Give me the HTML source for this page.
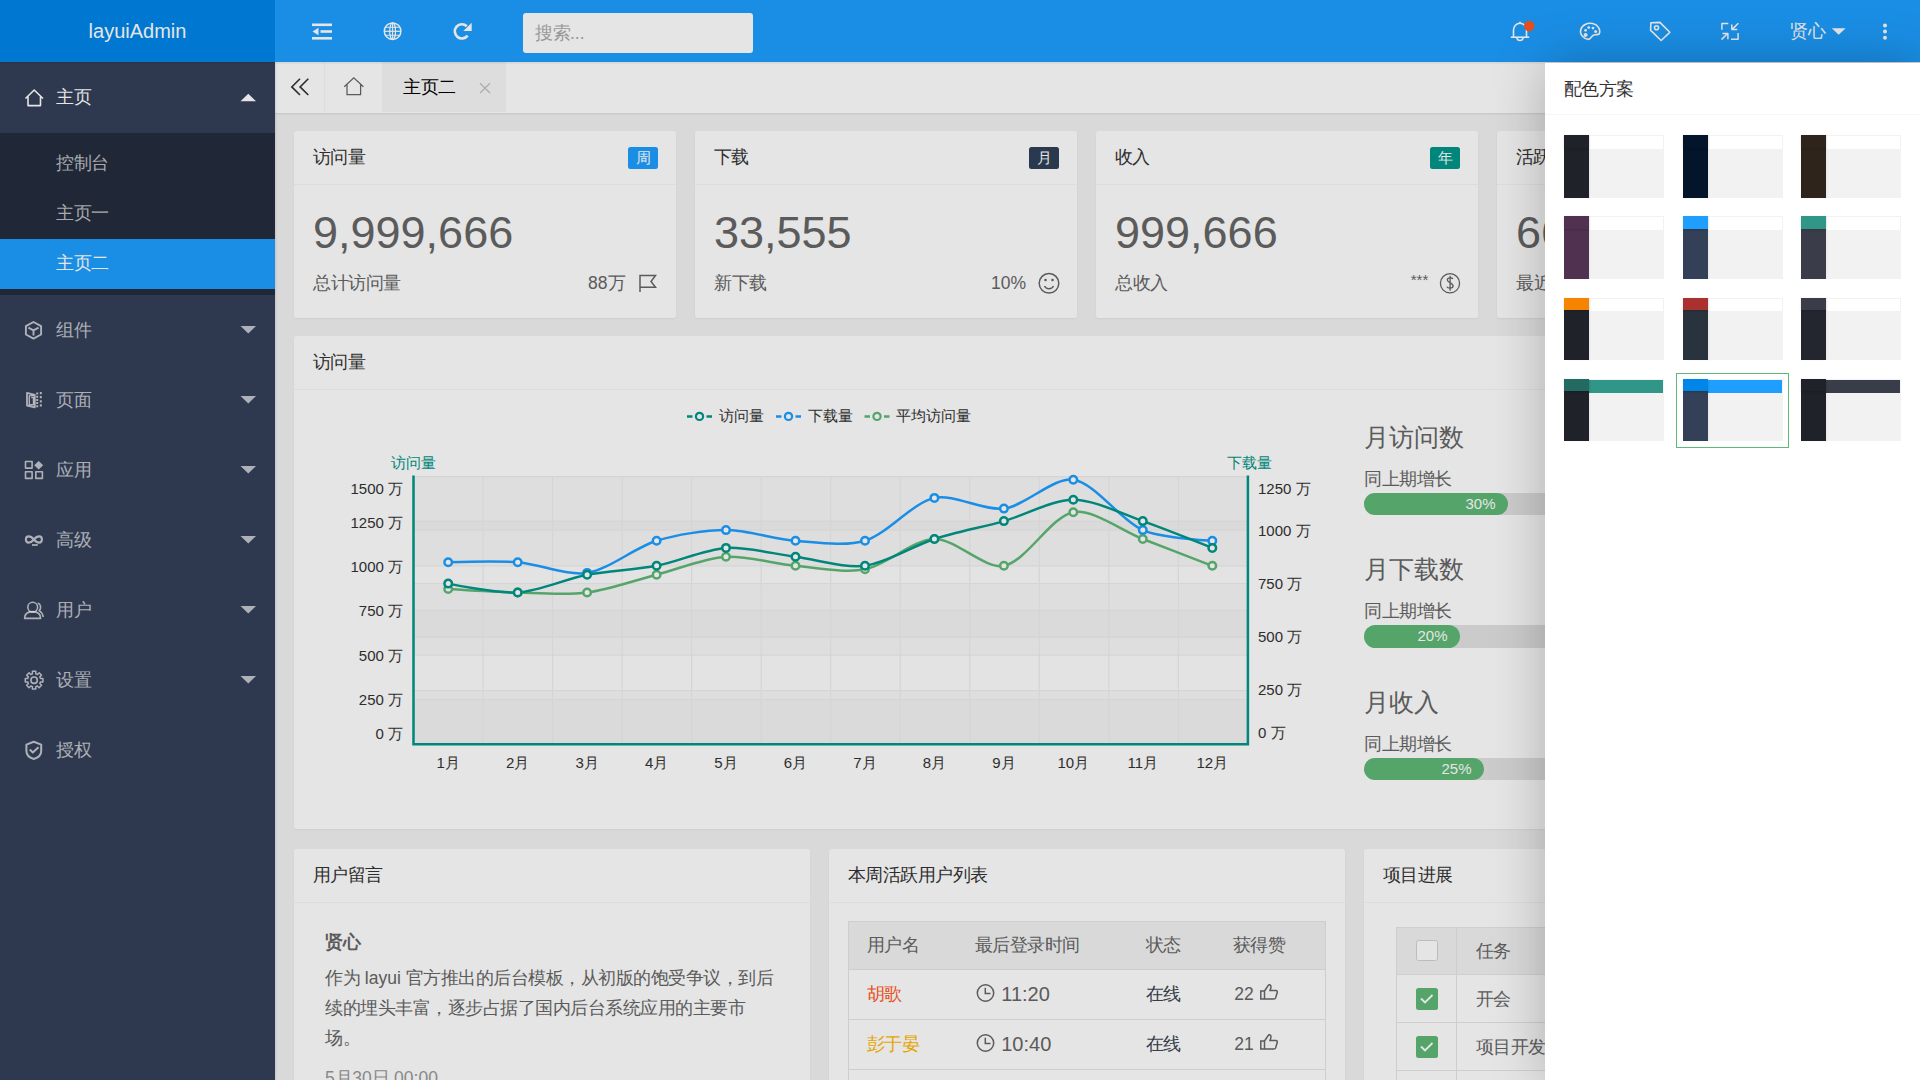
<!DOCTYPE html>
<html><head><meta charset="utf-8">
<style>
*{margin:0;padding:0;box-sizing:border-box}
html,body{width:1920px;height:1080px;overflow:hidden;background:#f2f2f2;font-family:"Liberation Sans",sans-serif;font-size:17.5px;color:#333}
.abs{position:absolute}
#header{position:absolute;left:0;top:0;width:1920px;height:62px;background:#1E9FFF;box-shadow:0 1px 2px 0 rgba(0,0,0,.1);z-index:5}
#logo{position:absolute;left:0;top:0;width:275px;height:62px;background:#0085E8;color:#fff;font-size:20px;line-height:62px;text-align:center}
#side{position:absolute;left:0;top:62px;width:275px;height:1018px;background:#344058;box-shadow:1px 0 2px 0 rgba(0,0,0,.1);z-index:4}
.st{position:absolute;left:56px;height:70px;line-height:70px;font-size:17.5px;color:rgba(255,255,255,.7);white-space:nowrap}
#tabs{position:absolute;left:275px;top:62px;width:1645px;height:50.5px;background:#fff;box-shadow:0 1px 2px 0 rgba(0,0,0,.1);z-index:3}
.card{position:absolute;background:#fff;border-radius:2.5px;box-shadow:0 1px 2px 0 rgba(0,0,0,.05);overflow:hidden}
.ch{position:absolute;left:0;top:0;right:0;height:53.75px;line-height:52.5px;padding-left:18.75px;border-bottom:1.25px solid #f6f6f6;color:#333;font-size:17.5px;white-space:nowrap;overflow:hidden}
.badge{position:absolute;left:334px;top:16px;width:30px;height:22px;line-height:22px;text-align:center;color:#fff;font-size:15px;border-radius:2.5px}
.big{position:absolute;left:19px;top:78.6px;line-height:45px;font-size:45px;color:#666;white-space:nowrap}
.ft{position:absolute;left:19px;top:136.75px;line-height:30px;font-size:17.5px;color:#666;white-space:nowrap}
.ftr{position:absolute;right:51.25px;top:136.75px;line-height:30px;font-size:17.5px;color:#666;white-space:nowrap}
.pl{position:absolute;left:1070px;line-height:30px;font-size:25px;color:#666;white-space:nowrap}
.ps{position:absolute;left:1070px;line-height:30px;font-size:17.5px;color:#666;white-space:nowrap}
.prog{position:absolute;left:1070px;width:480px;height:22.5px;border-radius:25px;background:#e2e2e2}
.bar{position:absolute;left:0;top:0;height:22.5px;border-radius:25px;background:#5FB878}
.bar span{position:absolute;right:12.5px;top:0;line-height:22.5px;font-size:15px;color:#fff}
.tbl{position:absolute}
.thead{position:absolute;left:0;top:0;width:100%;height:48.75px;background:#f2f2f2;border:1.25px solid #e6e6e6}
.tr{position:absolute;left:0;width:100%;height:50px;border:1.25px solid #e6e6e6;border-top:none}
.td{position:absolute;line-height:48.75px;font-size:17.5px;color:#333;white-space:nowrap}
#shade{position:absolute;left:0;top:0;width:1920px;height:1080px;background:rgba(0,0,0,.1);z-index:50}
#panel{position:absolute;left:1545px;top:62.5px;width:375px;height:1017.5px;background:#fff;box-shadow:1px 1px 50px rgba(0,0,0,.25);z-index:60}
.tile{position:absolute;width:100px;height:62.5px;background:#f2f2f2}
.th{position:absolute;left:0;top:0;width:100%;height:13.75px;border-top:1.25px solid #f2f2f2;border-right:1.25px solid #f2f2f2}
.ts{position:absolute;left:0;top:0;width:25px;height:100%;box-shadow:1px 0 2px 0 rgba(0,0,0,.05)}
.tl{position:absolute;left:0;top:0;width:100%;height:12.5px;box-shadow:0 1px 2px 0 rgba(0,0,0,.15)}
.cl{position:absolute;font-size:15px;line-height:20px;color:#333;white-space:nowrap;z-index:2}
.c{display:inline-block;width:1em;font-style:normal;text-align:center}

</style></head><body>
<div id="header">
  <div id="logo">layuiAdmin</div>
  <svg class="abs" style="left:0;top:0" width="1920" height="62" viewBox="0 0 1920 62">
    <g fill="#fff">
      <!-- shrink-right menu icon -->
      <rect x="312" y="23.5" width="20" height="2.6"/>
      <rect x="320.5" y="30.2" width="11.5" height="2.6"/>
      <path d="M312.5 31.5 L318.5 27.8 L318.5 35.2 Z"/>
      <rect x="312" y="37" width="20" height="2.6"/>
    </g>
    <g fill="none" stroke="#fff" stroke-width="1.5">
      <!-- globe -->
      <circle cx="392.6" cy="31.2" r="8.3" stroke-width="1.5"/>
      <ellipse cx="392.6" cy="31.2" rx="2.9" ry="8.3" stroke-width="1.2"/>
      <line x1="392.6" y1="23" x2="392.6" y2="39.5" stroke-width="1.1"/>
      <line x1="384.3" y1="31.3" x2="400.9" y2="31.3" stroke-width="1.2"/>
      <path d="M385.8 27.2 H399.4 M385.8 35.3 H399.4" stroke-width="1.1"/>
      <!-- refresh -->
      <path d="M467.6 35.6 A7.1 7.1 0 1 1 466.8 26.2" stroke-width="2.6"/>
    </g>
    <path d="M471.7 22.8 L471.7 31 L463.4 31 Z" fill="#fff"/>
    <!-- search box -->
    <rect x="523" y="13" width="230" height="40" rx="3" fill="#fff"/>
    <g fill="none" stroke="#fff" stroke-width="1.6" stroke-linejoin="round">
      <!-- bell -->
      <path d="M1513.5 37 V30 A6.5 6.8 0 0 1 1526.5 30 V37"/>
      <path d="M1510.8 37.2 H1529.2"/>
      <path d="M1517 37.5 A3 3 0 0 0 1523 37.5"/>
      <line x1="1520" y1="21.8" x2="1520" y2="23.5"/>
      <!-- palette -->
      <path d="M1599.2 34 A9.6 8.1 0 1 0 1588.6 39.4 C1590.8 39.2 1591.5 35.6 1593.8 34.9 C1596 34.3 1597.8 35 1599.2 34 Z"/>
      <!-- tag -->
      <path d="M1650.9 22.7 L1659.9 22.4 L1669.8 32.3 L1661.1 40.5 L1653.6 33.1 L1650.6 30.4 Z"/>
      <circle cx="1656.5" cy="27.8" r="2"/>
      <!-- screen restore -->
      <path d="M1721.9 29.8 V23.4 H1728.3" stroke-width="1.5"/>
      <path d="M1738.1 32.9 V39.3 H1731" stroke-width="1.5"/>
      <path d="M1738.3 23.3 L1732 29.6 M1731.8 24.4 V29.6 H1737.3" stroke-width="1.5"/>
      <path d="M1721.5 39.6 L1727.8 33.3 M1722.4 33.5 H1727.9 V39.3" stroke-width="1.5"/>
    </g>
    <g fill="#fff">
      <circle cx="1585.6" cy="30.3" r="1.4"/>
      <circle cx="1588.7" cy="27.6" r="1.4"/>
      <circle cx="1593" cy="28.1" r="1.4"/>
      <circle cx="1595.6" cy="31.5" r="1.5"/>
      <circle cx="1585.6" cy="35" r="2"/>
      <circle cx="1529.2" cy="26" r="5.2" fill="#FF5722"/>
      <path d="M1831.8 28.2 H1845.6 L1838.7 34.8 Z"/>
      <circle cx="1885" cy="25.5" r="2"/>
      <circle cx="1885" cy="31.6" r="2"/>
      <circle cx="1885" cy="37.8" r="2"/>
    </g>
  </svg>
  <div class="abs" style="left:535px;top:13px;line-height:40px;font-size:17.5px;color:#aaa"><i class="c">搜</i><i class="c">索</i>...</div>
  <div class="abs" style="left:1790px;top:14px;line-height:34px;font-size:17.5px;color:#fff"><i class="c">贤</i><i class="c">心</i></div>
</div>

<div id="side">
  <div class="abs" style="left:0;top:71px;width:275px;height:162px;background:rgba(0,0,0,.3)"></div>
  <div class="abs" style="left:0;top:176.8px;width:275px;height:50px;background:#1E9FFF"></div>
  <svg class="abs" style="left:0;top:-62px" width="275" height="1080" viewBox="0 0 275 1080">
    <g fill="none" stroke="rgba(255,255,255,.7)" stroke-width="1.6" stroke-linejoin="round">
      <!-- home -->
      <path d="M25.5 98.5 L34.2 90 L43 98.5 M28 96.5 V105.6 H40.5 V96.5" stroke="#fff"/>
      <!-- cube -->
      <path d="M33.5 322 L41.1 326.2 V334.5 L33.5 338.6 L25.9 334.5 V326.2 Z" stroke-width="1.9"/>
      <path d="M28.4 327.7 L33.5 330.4 L38.6 327.7 M33.5 330.4 V335.6" stroke-width="1.9"/>
      <!-- page -->
      <path d="M27 392.8 L34.8 394.8 V407.3 L27 405.5 Z" stroke-width="1.8"/>
      <path d="M29.3 395.5 H34 M29.3 395.5 V404.8 H34 M31.2 397.5 H33.5 V404" stroke-width="1.5"/>
      <path d="M37.2 392.5 V408" stroke-dasharray="2 1.2" stroke-width="2"/>
      <path d="M40.8 392 V407" stroke-dasharray="2.2 1.9" stroke-width="2"/>
      <!-- app -->
      <rect x="25.5" y="461.5" width="6.6" height="6.6"/>
      <rect x="25.5" y="471.8" width="6.6" height="6.6"/>
      <rect x="35.8" y="471.8" width="6.6" height="6.6"/>
      <!-- senior -->
      <path d="M33.9 539.5 C35.5 537.5 37.5 536.4 39.2 536.4 C41 536.4 41.9 537.7 41.9 539.5 C41.9 541.3 41 542.6 39.2 542.6 C37.5 542.6 35.5 541.5 33.9 539.5 C32.3 537.5 30.3 536.4 28.6 536.4 C26.8 536.4 25.9 537.7 25.9 539.5 C25.9 541.3 26.8 542.6 28.6 542.6 C30.3 542.6 32.3 541.5 33.9 539.5 Z" stroke-width="2.1"/>
      <path d="M32 545 H37.8" stroke-width="1.7"/>
      <!-- user -->
      <circle cx="32.7" cy="607.2" r="4.9"/>
      <path d="M24.6 618.4 C24.6 614 27.8 611.6 32.6 611.6 C37.4 611.6 40.6 614 40.6 618.4 Z"/>
      <path d="M37.8 603 C41 604 41.5 608.3 39.2 610.6 C41.5 612 42.9 614.5 43.2 617"/>
      <!-- gear -->
      <circle cx="34.1" cy="680.2" r="3.2"/>
      <path d="M32.39 673.82 L32.38 671.37 L35.82 671.37 L35.81 673.82 L37.40 674.48 L39.13 672.74 L41.56 675.17 L39.82 676.90 L40.48 678.49 L42.93 678.48 L42.93 681.92 L40.48 681.91 L39.82 683.50 L41.56 685.23 L39.13 687.66 L37.40 685.92 L35.81 686.58 L35.82 689.03 L32.38 689.03 L32.39 686.58 L30.80 685.92 L29.07 687.66 L26.64 685.23 L28.38 683.50 L27.72 681.91 L25.27 681.92 L25.27 678.48 L27.72 678.49 L28.38 676.90 L26.64 675.17 L29.07 672.74 L30.80 674.48 Z" stroke-width="1.5"/>
      <!-- shield -->
      <path d="M33.8 741.8 L41.2 744.6 V751 C41.2 755.3 37.8 757.8 33.8 759 C29.8 757.8 26.4 755.3 26.4 751 V744.6 Z" stroke-width="2"/>
      <path d="M29.8 749.6 L32.8 752.4 L38.5 747.2" stroke-width="2"/>
    </g>
    <path d="M38.7 461 L43.2 465.3 L38.7 469.6 L34.2 465.3 Z" fill="rgba(255,255,255,.7)"/>
    <g fill="rgba(255,255,255,.7)">
      <path d="M240.5 101.2 H256 L248.3 93.8 Z" fill="#fff"/>
      <path d="M240.5 326 H256 L248.3 333.5 Z"/>
      <path d="M240.5 396 H256 L248.3 403.5 Z"/>
      <path d="M240.5 466 H256 L248.3 473.5 Z"/>
      <path d="M240.5 536 H256 L248.3 543.5 Z"/>
      <path d="M240.5 606 H256 L248.3 613.5 Z"/>
      <path d="M240.5 676 H256 L248.3 683.5 Z"/>
    </g>
  </svg>
  <div class="st" style="top:0;color:#fff"><i class="c">主</i><i class="c">页</i></div>
  <div class="st" style="top:65.7px"><i class="c">控</i><i class="c">制</i><i class="c">台</i></div>
  <div class="st" style="top:116.2px"><i class="c">主</i><i class="c">页</i><i class="c">一</i></div>
  <div class="st" style="top:166px;color:#fff"><i class="c">主</i><i class="c">页</i><i class="c">二</i></div>
  <div class="st" style="top:232.5px"><i class="c">组</i><i class="c">件</i></div>
  <div class="st" style="top:302.5px"><i class="c">页</i><i class="c">面</i></div>
  <div class="st" style="top:372.5px"><i class="c">应</i><i class="c">用</i></div>
  <div class="st" style="top:442.5px"><i class="c">高</i><i class="c">级</i></div>
  <div class="st" style="top:512.5px"><i class="c">用</i><i class="c">户</i></div>
  <div class="st" style="top:582.5px"><i class="c">设</i><i class="c">置</i></div>
  <div class="st" style="top:652.5px"><i class="c">授</i><i class="c">权</i></div>
</div>

<div id="tabs">
  <div class="abs" style="left:0;top:0;width:49.5px;height:50px;border-right:1.25px solid #f6f6f6"></div>
  <div class="abs" style="left:49.5px;top:0;width:58px;height:50px;border-right:1.25px solid #f6f6f6"></div>
  <div class="abs" style="left:107.5px;top:0;width:123px;height:50px;background:#f6f6f6;border-right:1.25px solid #f6f6f6"></div>
  <div class="abs" style="left:128px;top:0;line-height:50px;font-size:17.5px;color:#000"><i class="c">主</i><i class="c">页</i><i class="c">二</i></div>
  <svg class="abs" style="left:0;top:0" width="300" height="50" viewBox="275 62.5 300 50">
    <g fill="none" stroke="#333" stroke-width="1.5" stroke-linejoin="miter">
      <path d="M300 79.3 L291.8 87.4 L300 95.5 M308.3 79.3 L300.1 87.4 L308.3 95.5" stroke-width="1.6"/>
      <path d="M344.2 87.2 L353.8 78.3 L363.4 87.2 M347 85 V95.2 H360.6 V85" stroke="#666" stroke-width="1.25"/>
      <path d="M480 83.8 L490 93.5 M490 83.8 L480 93.5" stroke="#c2c2c2" stroke-width="1.3"/>
    </g>
  </svg>
</div>

<div id="main">
  <!-- stat cards -->
  <div class="card" style="left:294px;top:131.25px;width:382.25px;height:186.25px">
    <div class="ch"><i class="c">访</i><i class="c">问</i><i class="c">量</i></div>
    <div class="badge" style="background:#1E9FFF"><i class="c">周</i></div>
    <div class="big">9,999,666</div>
    <div class="ft"><i class="c">总</i><i class="c">计</i><i class="c">访</i><i class="c">问</i><i class="c">量</i></div>
    <div class="ftr">88<i class="c">万</i></div>
    <svg class="abs" style="left:0;top:0" width="382" height="186" viewBox="0 0 382 186"><path d="M346 161 V144.5 H361.5 L357 150.5 L361.5 156.3 H346" fill="none" stroke="#666" stroke-width="1.5"/></svg>
  </div>
  <div class="card" style="left:695px;top:131.25px;width:382.25px;height:186.25px">
    <div class="ch"><i class="c">下</i><i class="c">载</i></div>
    <div class="badge" style="background:#2F4056"><i class="c">月</i></div>
    <div class="big">33,555</div>
    <div class="ft"><i class="c">新</i><i class="c">下</i><i class="c">载</i></div>
    <div class="ftr">10%</div>
    <svg class="abs" style="left:0;top:0" width="382" height="186" viewBox="0 0 382 186"><g fill="none" stroke="#666" stroke-width="1.5"><circle cx="354" cy="152.3" r="9.8"/><path d="M349.5 155 C351 158.5 357 158.5 358.5 155"/></g><circle cx="350.5" cy="149" r="1.3" fill="#666"/><circle cx="357.5" cy="149" r="1.3" fill="#666"/></svg>
  </div>
  <div class="card" style="left:1096px;top:131.25px;width:382.25px;height:186.25px">
    <div class="ch"><i class="c">收</i><i class="c">入</i></div>
    <div class="badge" style="background:#009688"><i class="c">年</i></div>
    <div class="big">999,666</div>
    <div class="ft"><i class="c">总</i><i class="c">收</i><i class="c">入</i></div>
    <div class="ftr" style="top:134px;right:50px;font-size:15px">***</div>
    <svg class="abs" style="left:0;top:0" width="382" height="186" viewBox="0 0 382 186"><g fill="none" stroke="#666" stroke-width="1.3"><circle cx="354" cy="152.3" r="9.6"/><path d="M357 148 C356 146.3 351.5 146.2 351.2 148.7 C350.8 151.5 357.3 151.7 357.1 155 C356.9 157.8 351.8 157.7 350.9 155.8 M354.1 144.8 V159.8"/></g></svg>
  </div>
  <div class="card" style="left:1497px;top:131.25px;width:382.25px;height:186.25px">
    <div class="ch"><i class="c">活</i><i class="c">跃</i><i class="c">用</i><i class="c">户</i></div>
    <div class="badge" style="background:#FFB800"><i class="c">月</i></div>
    <div class="big">66,666</div>
    <div class="ft"><i class="c">最</i><i class="c">近</i><i class="c">一</i><i class="c">个</i><i class="c">月</i></div>
  </div>
  <!-- chart card -->
  <div class="card" style="left:294px;top:336.25px;width:1585.25px;height:493px">
    <div class="ch"><i class="c">访</i><i class="c">问</i><i class="c">量</i></div>
    <div class="pl" style="top:85.5px"><i class="c">月</i><i class="c">访</i><i class="c">问</i><i class="c">数</i></div>
    <div class="ps" style="top:127.5px"><i class="c">同</i><i class="c">上</i><i class="c">期</i><i class="c">增</i><i class="c">长</i></div>
    <div class="prog" style="top:156.5px"><div class="bar" style="width:144px"><span>30%</span></div></div>
    <div class="pl" style="top:218px"><i class="c">月</i><i class="c">下</i><i class="c">载</i><i class="c">数</i></div>
    <div class="ps" style="top:260px"><i class="c">同</i><i class="c">上</i><i class="c">期</i><i class="c">增</i><i class="c">长</i></div>
    <div class="prog" style="top:289px"><div class="bar" style="width:96px"><span>20%</span></div></div>
    <div class="pl" style="top:350.5px"><i class="c">月</i><i class="c">收</i><i class="c">入</i></div>
    <div class="ps" style="top:392.5px"><i class="c">同</i><i class="c">上</i><i class="c">期</i><i class="c">增</i><i class="c">长</i></div>
    <div class="prog" style="top:421.5px"><div class="bar" style="width:120px"><span>25%</span></div></div>
  </div>
  <!-- bottom cards -->
  <div class="card" style="left:294px;top:848.75px;width:515.75px;height:300px">
    <div class="ch"><i class="c">用</i><i class="c">户</i><i class="c">留</i><i class="c">言</i></div>
    <div class="abs" style="left:31px;top:78px;font-size:17.5px;font-weight:bold;color:#666;line-height:30px"><i class="c">贤</i><i class="c">心</i></div>
    <div class="abs" style="left:31px;top:114px;width:470px;font-size:17.5px;color:#666;line-height:30px;white-space:nowrap"><i class="c">作</i><i class="c">为</i> layui <i class="c">官</i><i class="c">方</i><i class="c">推</i><i class="c">出</i><i class="c">的</i><i class="c">后</i><i class="c">台</i><i class="c">模</i><i class="c">板</i><i class="c">，</i><i class="c">从</i><i class="c">初</i><i class="c">版</i><i class="c">的</i><i class="c">饱</i><i class="c">受</i><i class="c">争</i><i class="c">议</i><i class="c">，</i><i class="c">到</i><i class="c">后</i><br><i class="c">续</i><i class="c">的</i><i class="c">埋</i><i class="c">头</i><i class="c">丰</i><i class="c">富</i><i class="c">，</i><i class="c">逐</i><i class="c">步</i><i class="c">占</i><i class="c">据</i><i class="c">了</i><i class="c">国</i><i class="c">内</i><i class="c">后</i><i class="c">台</i><i class="c">系</i><i class="c">统</i><i class="c">应</i><i class="c">用</i><i class="c">的</i><i class="c">主</i><i class="c">要</i><i class="c">市</i><br><i class="c">场</i><i class="c">。</i></div>
    <div class="abs" style="left:31px;top:214px;font-size:17.5px;color:#999;line-height:30px">5<i class="c">月</i>30<i class="c">日</i> 00:00</div>
  </div>
  <div class="card" style="left:829px;top:848.75px;width:515.75px;height:300px">
    <div class="ch"><i class="c">本</i><i class="c">周</i><i class="c">活</i><i class="c">跃</i><i class="c">用</i><i class="c">户</i><i class="c">列</i><i class="c">表</i></div>
    <div class="abs tbl" style="left:18.75px;top:72.5px;width:478px;height:260px">
      <div class="thead"></div>
      <div class="tr" style="top:48.75px"></div>
      <div class="tr" style="top:98.75px"></div>
      <div class="tr" style="top:148.75px"></div>
      <div class="td" style="left:18.75px;top:0;color:#666"><i class="c">用</i><i class="c">户</i><i class="c">名</i></div>
      <div class="td" style="left:127px;top:0;color:#666"><i class="c">最</i><i class="c">后</i><i class="c">登</i><i class="c">录</i><i class="c">时</i><i class="c">间</i></div>
      <div class="td" style="left:298px;top:0;color:#666"><i class="c">状</i><i class="c">态</i></div>
      <div class="td" style="left:385px;top:0;color:#666"><i class="c">获</i><i class="c">得</i><i class="c">赞</i></div>
      <div class="td" style="left:18.75px;top:48.75px;color:#FF5722"><i class="c">胡</i><i class="c">歌</i></div>
      <div class="td" style="left:153.5px;top:48.75px;font-size:20px;color:#666">11:20</div>
      <div class="td" style="left:298px;top:48.75px;color:#3a4350"><i class="c">在</i><i class="c">线</i></div>
      <div class="td" style="left:386.5px;top:48.75px;color:#666">22</div>
      <div class="td" style="left:18.75px;top:98.75px;color:#FFB800"><i class="c">彭</i><i class="c">于</i><i class="c">晏</i></div>
      <div class="td" style="left:153.5px;top:98.75px;font-size:20px;color:#666">10:40</div>
      <div class="td" style="left:298px;top:98.75px;color:#3a4350"><i class="c">在</i><i class="c">线</i></div>
      <div class="td" style="left:386.5px;top:98.75px;color:#666">21</div>
    </div>
  </div>
  <div class="card" style="left:1364px;top:848.75px;width:515.75px;height:300px">
    <div class="ch"><i class="c">项</i><i class="c">目</i><i class="c">进</i><i class="c">展</i></div>
    <div class="abs tbl" style="left:31.6px;top:78.35px;width:460px;height:260px">
      <div class="thead" style="height:48px"></div>
      <div class="tr" style="top:48px;height:48.3px"></div>
      <div class="tr" style="top:96.3px;height:47.7px"></div>
      <div class="tr" style="top:144px;height:48px"></div>
      <div class="abs" style="left:60px;top:0;width:1.25px;height:260px;background:#e6e6e6"></div>
      <div class="abs" style="left:20px;top:13.3px;width:22.2px;height:20.6px;background:#fff;border:1.25px solid #d2d2d2;border-radius:2.5px"></div>
      <div class="abs" style="left:20px;top:60.7px;width:22.2px;height:22.2px;background:#5FB878;border-radius:2.5px"></div>
      <div class="abs" style="left:20px;top:108.5px;width:22.2px;height:22.2px;background:#5FB878;border-radius:2.5px"></div>
      <div class="td" style="left:80px;top:0;color:#666;line-height:48px"><i class="c">任</i><i class="c">务</i></div>
      <div class="td" style="left:80px;top:48px;color:#666;line-height:48px"><i class="c">开</i><i class="c">会</i></div>
      <div class="td" style="left:80px;top:96px;color:#666;line-height:48px"><i class="c">项</i><i class="c">目</i><i class="c">开</i><i class="c">发</i></div>
    </div>
  </div>
  <svg class="abs" style="left:0;top:0;z-index:3" width="1920" height="1080" viewBox="0 0 1920 1080">
    <g fill="none" stroke="#666" stroke-width="1.5">
      <circle cx="985.5" cy="993" r="8.2"/>
      <path d="M985.3 987.8 V993.5 H990.5"/>
      <circle cx="985.5" cy="1043" r="8.2"/>
      <path d="M985.3 1037.8 V1043.5 H990.5"/>
      <path d="M1260.8 991 H1264.5 V999 H1260.8 Z M1264.5 991 L1268.5 985 C1270.5 984.3 1271.3 986 1270.8 988 L1270 990.5 H1276 C1277 990.5 1277.5 991.5 1277.2 992.5 L1275.6 998 C1275.3 998.7 1274.8 999 1274 999 H1264.5"/>
      <path d="M1260.8 1041 H1264.5 V1049 H1260.8 Z M1264.5 1041 L1268.5 1035 C1270.5 1034.3 1271.3 1036 1270.8 1038 L1270 1040.5 H1276 C1277 1040.5 1277.5 1041.5 1277.2 1042.5 L1275.6 1048 C1275.3 1048.7 1274.8 1049 1274 1049 H1264.5"/>
    </g>
    <g fill="none" stroke="#fff" stroke-width="1.8">
      <path d="M1421 998.5 L1425 1002.5 L1432.5 995"/>
      <path d="M1421 1046.5 L1425 1050.5 L1432.5 1043"/>
    </g>
  </svg>
</div>

<svg class="abs" style="left:0;top:0;z-index:2" width="1920" height="1080" viewBox="0 0 1920 1080" font-family="Liberation Sans, sans-serif">
<rect x="413.50" y="699.67" width="834.40" height="44.63" fill="rgba(200,200,200,0.1)"/>
<rect x="413.50" y="655.03" width="834.40" height="44.63" fill="rgba(250,250,250,0.1)"/>
<rect x="413.50" y="610.40" width="834.40" height="44.63" fill="rgba(200,200,200,0.1)"/>
<rect x="413.50" y="565.77" width="834.40" height="44.63" fill="rgba(250,250,250,0.1)"/>
<rect x="413.50" y="521.13" width="834.40" height="44.63" fill="rgba(200,200,200,0.1)"/>
<rect x="413.50" y="476.50" width="834.40" height="44.63" fill="rgba(250,250,250,0.1)"/>
<rect x="413.50" y="690.74" width="834.40" height="53.56" fill="rgba(200,200,200,0.1)"/>
<rect x="413.50" y="637.18" width="834.40" height="53.56" fill="rgba(250,250,250,0.1)"/>
<rect x="413.50" y="583.62" width="834.40" height="53.56" fill="rgba(200,200,200,0.1)"/>
<rect x="413.50" y="530.06" width="834.40" height="53.56" fill="rgba(250,250,250,0.1)"/>
<rect x="413.50" y="476.50" width="834.40" height="53.56" fill="rgba(200,200,200,0.1)"/>
<line x1="413.50" y1="744.30" x2="1247.90" y2="744.30" stroke="#eee" stroke-width="1.25"/>
<line x1="413.50" y1="699.67" x2="1247.90" y2="699.67" stroke="#eee" stroke-width="1.25"/>
<line x1="413.50" y1="655.03" x2="1247.90" y2="655.03" stroke="#eee" stroke-width="1.25"/>
<line x1="413.50" y1="610.40" x2="1247.90" y2="610.40" stroke="#eee" stroke-width="1.25"/>
<line x1="413.50" y1="565.77" x2="1247.90" y2="565.77" stroke="#eee" stroke-width="1.25"/>
<line x1="413.50" y1="521.13" x2="1247.90" y2="521.13" stroke="#eee" stroke-width="1.25"/>
<line x1="413.50" y1="476.50" x2="1247.90" y2="476.50" stroke="#eee" stroke-width="1.25"/>
<line x1="413.50" y1="744.30" x2="1247.90" y2="744.30" stroke="#eee" stroke-width="1.25"/>
<line x1="413.50" y1="690.74" x2="1247.90" y2="690.74" stroke="#eee" stroke-width="1.25"/>
<line x1="413.50" y1="637.18" x2="1247.90" y2="637.18" stroke="#eee" stroke-width="1.25"/>
<line x1="413.50" y1="583.62" x2="1247.90" y2="583.62" stroke="#eee" stroke-width="1.25"/>
<line x1="413.50" y1="530.06" x2="1247.90" y2="530.06" stroke="#eee" stroke-width="1.25"/>
<line x1="413.50" y1="476.50" x2="1247.90" y2="476.50" stroke="#eee" stroke-width="1.25"/>
<line x1="413.50" y1="476.50" x2="413.50" y2="744.30" stroke="#eee" stroke-width="1.25"/>
<line x1="483.03" y1="476.50" x2="483.03" y2="744.30" stroke="#eee" stroke-width="1.25"/>
<line x1="552.57" y1="476.50" x2="552.57" y2="744.30" stroke="#eee" stroke-width="1.25"/>
<line x1="622.10" y1="476.50" x2="622.10" y2="744.30" stroke="#eee" stroke-width="1.25"/>
<line x1="691.63" y1="476.50" x2="691.63" y2="744.30" stroke="#eee" stroke-width="1.25"/>
<line x1="761.17" y1="476.50" x2="761.17" y2="744.30" stroke="#eee" stroke-width="1.25"/>
<line x1="830.70" y1="476.50" x2="830.70" y2="744.30" stroke="#eee" stroke-width="1.25"/>
<line x1="900.23" y1="476.50" x2="900.23" y2="744.30" stroke="#eee" stroke-width="1.25"/>
<line x1="969.77" y1="476.50" x2="969.77" y2="744.30" stroke="#eee" stroke-width="1.25"/>
<line x1="1039.30" y1="476.50" x2="1039.30" y2="744.30" stroke="#eee" stroke-width="1.25"/>
<line x1="1108.83" y1="476.50" x2="1108.83" y2="744.30" stroke="#eee" stroke-width="1.25"/>
<line x1="1178.37" y1="476.50" x2="1178.37" y2="744.30" stroke="#eee" stroke-width="1.25"/>
<line x1="1247.90" y1="476.50" x2="1247.90" y2="744.30" stroke="#eee" stroke-width="1.25"/>
<path d="M448.2 589.0 C448.2 589.0 496.8 592.0 517.7 592.5 C538.5 593.1 566.6 595.2 587.1 592.5 C608.3 589.8 635.7 580.0 656.6 574.7 C677.4 569.3 705.0 558.2 726.0 556.8 C746.6 555.5 774.6 563.9 795.5 565.8 C816.3 567.6 845.0 573.2 865.0 569.3 C886.7 565.1 913.4 539.5 934.4 539.0 C955.1 538.5 984.7 569.5 1003.9 565.8 C1026.4 561.4 1050.8 516.6 1073.3 512.2 C1092.5 508.5 1122.0 531.0 1142.8 539.0 C1163.6 547.0 1212.3 565.8 1212.3 565.8" fill="none" stroke="#5FB878" stroke-width="2.5"/>
<path d="M448.2 562.2 C448.2 562.2 496.9 560.6 517.7 562.2 C538.6 563.8 567.2 576.0 587.1 572.9 C608.8 569.6 634.9 547.5 656.6 540.8 C676.5 534.6 705.2 530.1 726.0 530.1 C746.9 530.1 774.5 539.2 795.5 540.8 C816.2 542.4 845.8 546.7 865.0 540.8 C887.5 533.8 912.0 503.1 934.4 497.9 C953.7 493.5 983.8 511.3 1003.9 508.6 C1025.4 505.8 1053.9 476.7 1073.3 479.7 C1095.5 483.1 1119.9 520.0 1142.8 530.1 C1161.6 538.3 1212.3 540.8 1212.3 540.8" fill="none" stroke="#1E9FFF" stroke-width="2.5"/>
<path d="M448.2 583.6 C448.2 583.6 497.1 593.9 517.7 592.5 C538.7 591.2 566.0 578.8 587.1 574.7 C607.7 570.7 636.0 569.7 656.6 565.8 C677.7 561.7 705.0 549.3 726.0 547.9 C746.6 546.6 774.7 554.2 795.5 556.8 C816.3 559.5 844.8 568.4 865.0 565.8 C886.4 563.0 913.2 545.8 934.4 539.0 C954.9 532.4 983.2 527.0 1003.9 521.1 C1024.9 515.2 1052.5 499.7 1073.3 499.7 C1094.2 499.7 1122.2 514.0 1142.8 521.1 C1163.9 528.5 1212.3 547.9 1212.3 547.9" fill="none" stroke="#009688" stroke-width="2.5"/>
<g fill="#fff" stroke="#5FB878" stroke-width="2.5"><circle cx="448.2" cy="589.0" r="3.75"/><circle cx="517.7" cy="592.5" r="3.75"/><circle cx="587.1" cy="592.5" r="3.75"/><circle cx="656.6" cy="574.7" r="3.75"/><circle cx="726.0" cy="556.8" r="3.75"/><circle cx="795.5" cy="565.8" r="3.75"/><circle cx="865.0" cy="569.3" r="3.75"/><circle cx="934.4" cy="539.0" r="3.75"/><circle cx="1003.9" cy="565.8" r="3.75"/><circle cx="1073.3" cy="512.2" r="3.75"/><circle cx="1142.8" cy="539.0" r="3.75"/><circle cx="1212.3" cy="565.8" r="3.75"/></g>
<g fill="#fff" stroke="#1E9FFF" stroke-width="2.5"><circle cx="448.2" cy="562.2" r="3.75"/><circle cx="517.7" cy="562.2" r="3.75"/><circle cx="587.1" cy="572.9" r="3.75"/><circle cx="656.6" cy="540.8" r="3.75"/><circle cx="726.0" cy="530.1" r="3.75"/><circle cx="795.5" cy="540.8" r="3.75"/><circle cx="865.0" cy="540.8" r="3.75"/><circle cx="934.4" cy="497.9" r="3.75"/><circle cx="1003.9" cy="508.6" r="3.75"/><circle cx="1073.3" cy="479.7" r="3.75"/><circle cx="1142.8" cy="530.1" r="3.75"/><circle cx="1212.3" cy="540.8" r="3.75"/></g>
<g fill="#fff" stroke="#009688" stroke-width="2.5"><circle cx="448.2" cy="583.6" r="3.75"/><circle cx="517.7" cy="592.5" r="3.75"/><circle cx="587.1" cy="574.7" r="3.75"/><circle cx="656.6" cy="565.8" r="3.75"/><circle cx="726.0" cy="547.9" r="3.75"/><circle cx="795.5" cy="556.8" r="3.75"/><circle cx="865.0" cy="565.8" r="3.75"/><circle cx="934.4" cy="539.0" r="3.75"/><circle cx="1003.9" cy="521.1" r="3.75"/><circle cx="1073.3" cy="499.7" r="3.75"/><circle cx="1142.8" cy="521.1" r="3.75"/><circle cx="1212.3" cy="547.9" r="3.75"/></g>
<path d="M413.50 475.50 V744.30 H1247.90 V475.50" fill="none" stroke="#009688" stroke-width="2.5"/>
<path d="M687.0 416.4 H692.5 M706.5 416.4 H712.0" stroke="#009688" stroke-width="2.5"/>
<circle cx="699.5" cy="416.4" r="3.6" fill="#fff" stroke="#009688" stroke-width="2.2"/>
<path d="M776.0 416.4 H781.5 M795.5 416.4 H801.0" stroke="#1E9FFF" stroke-width="2.5"/>
<circle cx="788.5" cy="416.4" r="3.6" fill="#fff" stroke="#1E9FFF" stroke-width="2.2"/>
<path d="M864.5 416.4 H870.0 M884.0 416.4 H889.5" stroke="#5FB878" stroke-width="2.5"/>
<circle cx="877.0" cy="416.4" r="3.6" fill="#fff" stroke="#5FB878" stroke-width="2.2"/>
</svg>
<div class="cl" style="right:1517.0px;top:478.8px;text-align:right">1500 <i class="c">万</i></div>
<div class="cl" style="right:1517.0px;top:512.6px;text-align:right">1250 <i class="c">万</i></div>
<div class="cl" style="right:1517.0px;top:556.6px;text-align:right">1000 <i class="c">万</i></div>
<div class="cl" style="right:1517.0px;top:600.7px;text-align:right">750 <i class="c">万</i></div>
<div class="cl" style="right:1517.0px;top:645.7px;text-align:right">500 <i class="c">万</i></div>
<div class="cl" style="right:1517.0px;top:689.8px;text-align:right">250 <i class="c">万</i></div>
<div class="cl" style="right:1517.0px;top:723.6px;text-align:right">0 <i class="c">万</i></div>
<div class="cl" style="left:1258px;top:478.6px">1250 <i class="c">万</i></div>
<div class="cl" style="left:1258px;top:521.3px">1000 <i class="c">万</i></div>
<div class="cl" style="left:1258px;top:574.0px">750 <i class="c">万</i></div>
<div class="cl" style="left:1258px;top:627.4px">500 <i class="c">万</i></div>
<div class="cl" style="left:1258px;top:680.4px">250 <i class="c">万</i></div>
<div class="cl" style="left:1258px;top:723.4px">0 <i class="c">万</i></div>
<div class="cl" style="left:398.2px;top:753.0px;width:100px;text-align:center">1<i class="c">月</i></div>
<div class="cl" style="left:467.7px;top:753.0px;width:100px;text-align:center">2<i class="c">月</i></div>
<div class="cl" style="left:537.1px;top:753.0px;width:100px;text-align:center">3<i class="c">月</i></div>
<div class="cl" style="left:606.6px;top:753.0px;width:100px;text-align:center">4<i class="c">月</i></div>
<div class="cl" style="left:676.0px;top:753.0px;width:100px;text-align:center">5<i class="c">月</i></div>
<div class="cl" style="left:745.5px;top:753.0px;width:100px;text-align:center">6<i class="c">月</i></div>
<div class="cl" style="left:815.0px;top:753.0px;width:100px;text-align:center">7<i class="c">月</i></div>
<div class="cl" style="left:884.4px;top:753.0px;width:100px;text-align:center">8<i class="c">月</i></div>
<div class="cl" style="left:953.9px;top:753.0px;width:100px;text-align:center">9<i class="c">月</i></div>
<div class="cl" style="left:1023.3px;top:753.0px;width:100px;text-align:center">10<i class="c">月</i></div>
<div class="cl" style="left:1092.8px;top:753.0px;width:100px;text-align:center">11<i class="c">月</i></div>
<div class="cl" style="left:1162.3px;top:753.0px;width:100px;text-align:center">12<i class="c">月</i></div>
<div class="cl" style="left:363.5px;top:452.5px;width:100px;text-align:center;color:#009688"><i class="c">访</i><i class="c">问</i><i class="c">量</i></div>
<div class="cl" style="left:1199px;top:452.5px;width:100px;text-align:center;color:#009688"><i class="c">下</i><i class="c">载</i><i class="c">量</i></div>
<div class="cl" style="left:719.0px;top:406.4px"><i class="c">访</i><i class="c">问</i><i class="c">量</i></div>
<div class="cl" style="left:808.0px;top:406.4px"><i class="c">下</i><i class="c">载</i><i class="c">量</i></div>
<div class="cl" style="left:896.4px;top:406.4px"><i class="c">平</i><i class="c">均</i><i class="c">访</i><i class="c">问</i><i class="c">量</i></div>
<div id="shade"></div>
<div id="panel">
<div class="abs" style="left:0;top:0;width:375px;height:52.5px;border-bottom:1.25px solid #f6f6f6;padding-left:18.75px;line-height:52.5px;font-size:17.5px;color:#333"><i class="c">配</i><i class="c">色</i><i class="c">方</i><i class="c">案</i></div>
<div class="tile" style="left:18.75px;top:72.50px">
<div class="th" style="background:#fff"></div>
<div class="ts" style="background:#20222A"><div class="tl" style="background:#20222A"></div></div>
</div>
<div class="tile" style="left:137.50px;top:72.50px">
<div class="th" style="background:#fff"></div>
<div class="ts" style="background:#03152A"><div class="tl" style="background:#03152A"></div></div>
</div>
<div class="tile" style="left:256.25px;top:72.50px">
<div class="th" style="background:#fff"></div>
<div class="ts" style="background:#2E241B"><div class="tl" style="background:#2E241B"></div></div>
</div>
<div class="tile" style="left:18.75px;top:153.75px">
<div class="th" style="background:#fff"></div>
<div class="ts" style="background:#50314F"><div class="tl" style="background:#50314F"></div></div>
</div>
<div class="tile" style="left:137.50px;top:153.75px">
<div class="th" style="background:#fff"></div>
<div class="ts" style="background:#344058"><div class="tl" style="background:#1E9FFF"></div></div>
</div>
<div class="tile" style="left:256.25px;top:153.75px">
<div class="th" style="background:#fff"></div>
<div class="ts" style="background:#3A3D49"><div class="tl" style="background:#2F9688"></div></div>
</div>
<div class="tile" style="left:18.75px;top:235.00px">
<div class="th" style="background:#fff"></div>
<div class="ts" style="background:#20222A"><div class="tl" style="background:#F78400"></div></div>
</div>
<div class="tile" style="left:137.50px;top:235.00px">
<div class="th" style="background:#fff"></div>
<div class="ts" style="background:#28333E"><div class="tl" style="background:#AA3130"></div></div>
</div>
<div class="tile" style="left:256.25px;top:235.00px">
<div class="th" style="background:#fff"></div>
<div class="ts" style="background:#24262F"><div class="tl" style="background:#3A3D49"></div></div>
</div>
<div class="tile" style="left:18.75px;top:316.25px">
<div class="th" style="background:#2F9688"></div>
<div class="ts" style="background:#20222A"><div class="tl" style="background:#226A62"></div></div>
</div>
<div class="tile" style="left:137.50px;top:316.25px">
<div class="th" style="background:#1E9FFF"></div>
<div class="ts" style="background:#344058"><div class="tl" style="background:#0085E8"></div></div>
</div>
<div class="tile" style="left:256.25px;top:316.25px">
<div class="th" style="background:#393D49"></div>
<div class="ts" style="background:#20222A"><div class="tl" style="background:#20222A"></div></div>
</div>
<div class="abs" style="left:131.25px;top:310.00px;width:112.5px;height:75px;border:1.25px solid #5FB878"></div>
</div>
</body></html>
